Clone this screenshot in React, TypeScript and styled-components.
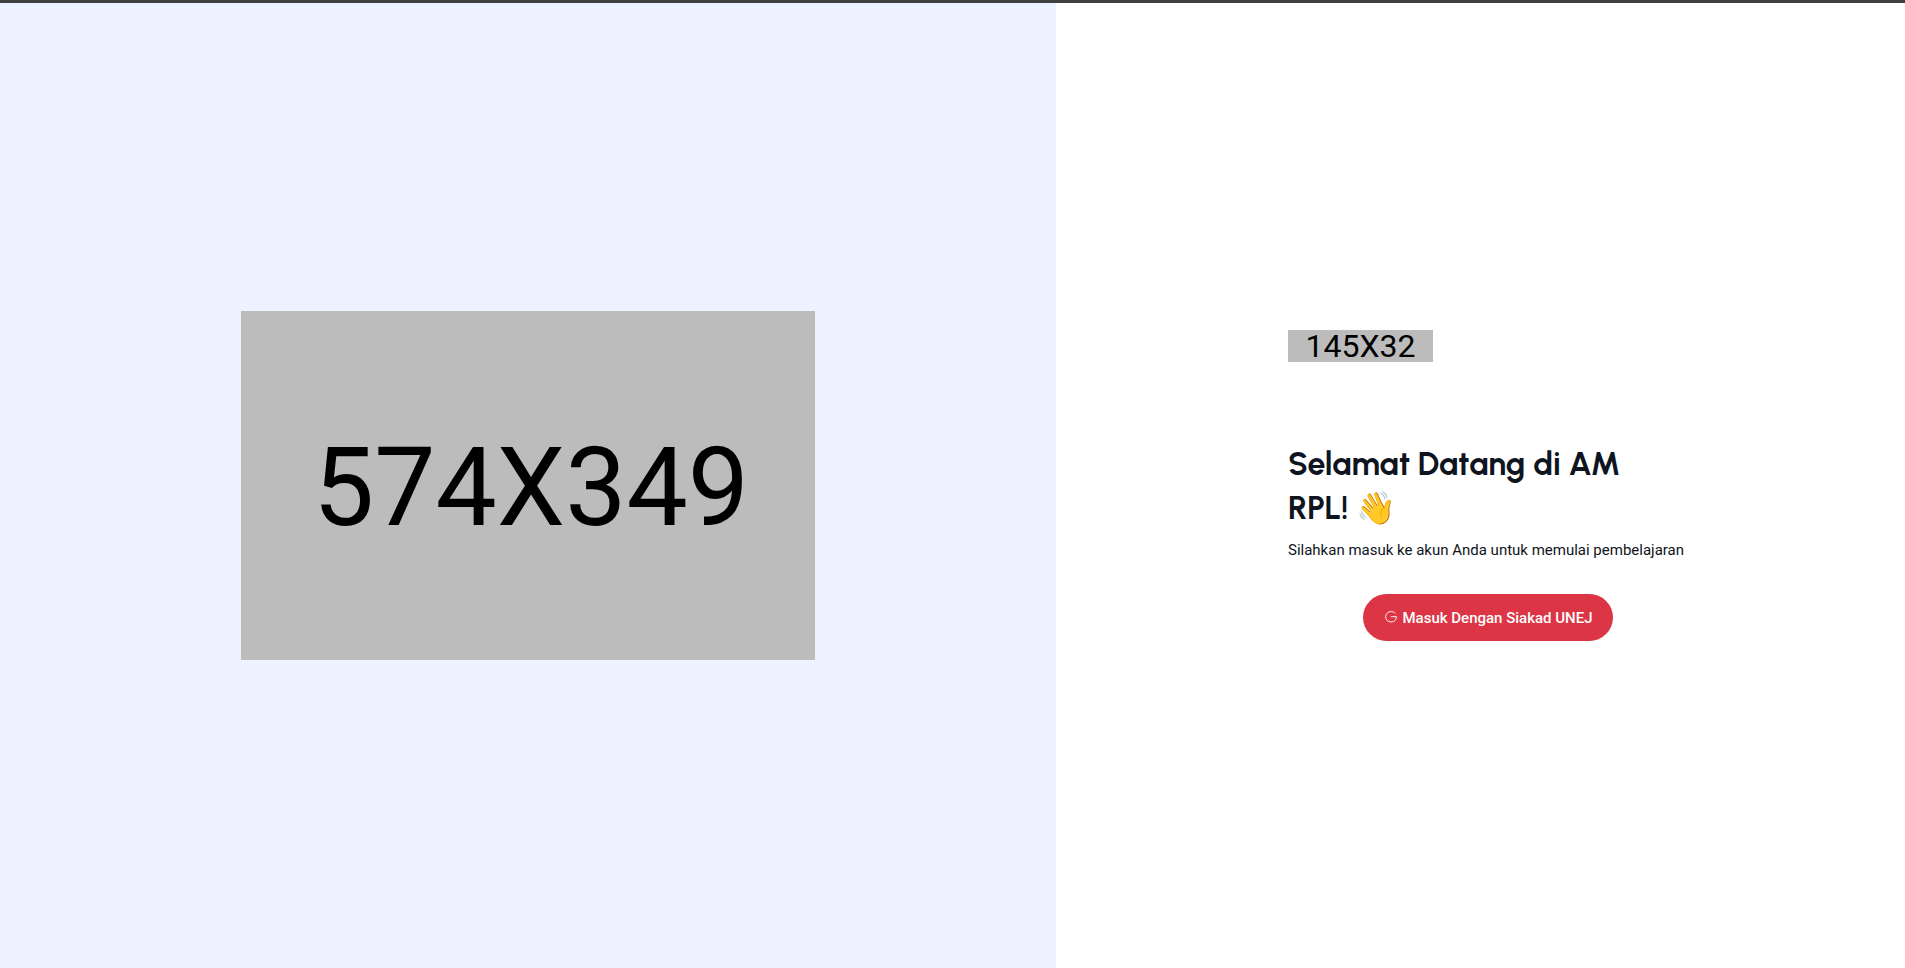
import React from "react";
import styled, { createGlobalStyle } from "styled-components";

const GlobalStyle = createGlobalStyle`
  *, *::before, *::after { box-sizing: border-box; }
  body {
    margin: 0;
    background: #ffffff;
    color: #0e1420;
    font-family: Roboto, "Liberation Sans", sans-serif;
    font-size: 15px;
    line-height: 24px;
  }
`;

const Page = styled.main`
  display: grid;
  grid-template-columns: 1056fr 849fr;
  min-height: 100vh;
  border-top: 3px solid #3e4040;
`;

const Illustration = styled.section`
  display: flex;
  align-items: center;
  justify-content: center;
  background: #ecf2ff;
`;

const Placeholder = styled.div<{ $width: number; $height: number; $size: number; $inset?: number }>`
  display: flex;
  align-items: center;
  justify-content: center;
  width: ${(p) => p.$width}px;
  height: ${(p) => p.$height}px;
  padding: ${(p) => p.$inset ?? 0}px 0 0 ${(p) => p.$inset ?? 0}px;
  background: #bcbcbc;
  color: #000000;
  font-size: ${(p) => p.$size}px;
  line-height: 1;
`;

const FormSide = styled.section`
  display: flex;
  align-items: center;
  justify-content: center;
  padding-left: 15px;
`;

const Form = styled.div`
  display: flex;
  flex-direction: column;
  width: 400px;
`;

const Title = styled.h1`
  margin: 80px 0 8px;
  font-family: Urbanist, Lato, sans-serif;
  font-size: 32px;
  font-weight: 700;
  line-height: 44px;
`;

const Lead = styled.p`
  margin: 0 0 32px;
`;

const LoginButton = styled.button`
  display: flex;
  align-items: center;
  align-self: center;
  justify-content: center;
  gap: 5px;
  width: 250px;
  height: 47px;
  padding: 0 0 0 2px;
  border: 0;
  border-radius: 24px;
  background: #dc3545;
  color: #ffffff;
  font: inherit;
  font-weight: 500;
  cursor: pointer;
`;

const GoogleIcon = () => (
  <svg width="12" height="13" viewBox="0 0 12 13" fill="none" stroke="currentColor" aria-hidden="true">
    <path
      d="M10.4 2.3C9.3 1.2 7.8 .6 6.1 .6C3 .6 .6 2.9 .6 5.8S3 11 6.1 11C9.2 11 11.5 8.9 11.5 5.7H5.8"
      strokeWidth="0.9"
    />
  </svg>
);

export default function App() {
  return (
    <>
      <GlobalStyle />
      <Page>
        <Illustration>
          <Placeholder $width={574} $height={349} $size={109} $inset={6}>574X349</Placeholder>
        </Illustration>
        <FormSide>
          <Form>
            <Placeholder $width={145} $height={32} $size={32}>145X32</Placeholder>
            <Title>Selamat Datang di AM RPL! 👋</Title>
            <Lead>Silahkan masuk ke akun Anda untuk memulai pembelajaran</Lead>
            <LoginButton type="button">
              <GoogleIcon />
              <span>Masuk Dengan Siakad UNEJ</span>
            </LoginButton>
          </Form>
        </FormSide>
      </Page>
    </>
  );
}
